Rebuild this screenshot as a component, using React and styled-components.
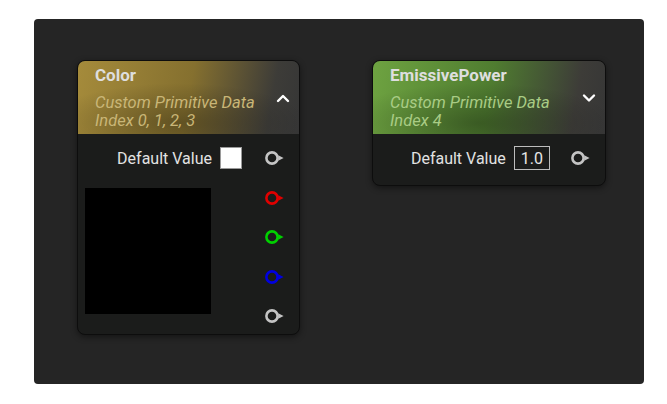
import styled, { createGlobalStyle } from 'styled-components';

const GlobalStyle = createGlobalStyle`
  html, body {
    margin: 0;
    padding: 0;
    background: #ffffff;
    font-family: Roboto, "Liberation Sans", sans-serif;
  }
`;

const Page = styled.div`
  width: 667px;
  height: 404px;
  padding: 19px 23px 0 34px;
  box-sizing: border-box;
`;

const Canvas = styled.div`
  width: 610px;
  height: 365px;
  background: #252525;
  border-radius: 4px;
  box-sizing: border-box;
  padding: 41px 0 0 43px;
  display: flex;
  align-items: flex-start;
  gap: 72px;
`;

const Node = styled.div`
  width: ${(p) => p.$width}px;
  background: #1b1c1b;
  border: 1px solid #0d0d0d;
  border-radius: 8px;
  box-shadow: 0 2px 6px rgba(0, 0, 0, 0.45);
  overflow: hidden;
  box-sizing: border-box;
`;

const Header = styled.div`
  height: 73px;
  display: flex;
  align-items: center;
  padding: 0 9px 0 17px;
  box-sizing: border-box;
  background:
    radial-gradient(ellipse 60% 55% at 45% 85%, rgba(0, 0, 0, 0.28), rgba(0, 0, 0, 0) 100%),
    linear-gradient(100deg, ${(p) => p.$tint} 0%, ${(p) => p.$mid} 50%, #3d3c38 86%, #363636 100%);
`;

const HeaderText = styled.div`
  flex: 1;
  display: flex;
  flex-direction: column;
`;

const Title = styled.div`
  font-size: 17px;
  font-weight: 700;
  color: #dedede;
  line-height: 18px;
  margin-bottom: 10px;
`;

const Subtitle = styled.div`
  font-size: 16.5px;
  font-style: italic;
  color: ${(p) => p.$color};
  line-height: 18px;
  white-space: nowrap;
`;

const Chevron = styled.svg`
  width: 14px;
  height: 10px;
  flex-shrink: 0;
`;

const Body = styled.div`
  display: flex;
  padding: 12px 14px ${(p) => p.$bottom}px 7px;
`;

const LeftColumn = styled.div`
  flex: 1;
  display: flex;
  flex-direction: column;
`;

const ValueRow = styled.div`
  height: 24px;
  display: flex;
  align-items: center;
  justify-content: flex-end;
  gap: 8px;
  margin-right: ${(p) => p.$gap}px;
`;

const Label = styled.span`
  font-size: 16px;
  color: #e2e2e2;
`;

const Swatch = styled.div`
  width: 20px;
  height: 20px;
  background: #ffffff;
  border: 1px solid #9a9a9a;
`;

const NumberBox = styled.div`
  height: 24px;
  box-sizing: border-box;
  padding: 0 6px;
  border: 1px solid #bdbdbd;
  color: #e6e6e6;
  font-size: 16px;
  display: flex;
  align-items: center;
`;

const Preview = styled.div`
  width: 126px;
  height: 126px;
  background: #000000;
  margin-top: 18px;
`;

const PinColumn = styled.div`
  display: flex;
  flex-direction: column;
  gap: 15.5px;
`;

const PinSlot = styled.div`
  height: 24px;
  display: flex;
  align-items: center;
`;

const Pin = ({ color }) => (
  <PinSlot>
    <svg width="20" height="14" viewBox="0 0 20 14">
      <circle cx="7" cy="7" r="5.6" fill="none" stroke={color} strokeWidth="2.6" />
      <path d="M13.2 4.2 L18.6 7 L13.2 9.8 Z" fill={color} />
    </svg>
  </PinSlot>
);

const ChevronIcon = ({ up }) => (
  <Chevron viewBox="0 0 14 10">
    <path
      d={up ? 'M2 8 L7 3 L12 8' : 'M2 2.5 L7 7.5 L12 2.5'}
      fill="none"
      stroke="#ffffff"
      strokeWidth="2.4"
      strokeLinecap="round"
      strokeLinejoin="round"
    />
  </Chevron>
);

export default function App() {
  return (
    <>
      <GlobalStyle />
      <Page>
        <Canvas>
          <Node $width={223}>
            <Header $tint="#a58b3b" $mid="#85702f">
              <HeaderText>
                <Title>Color</Title>
                <Subtitle $color="#c9b677">Custom Primitive Data</Subtitle>
                <Subtitle $color="#c9b677">Index 0, 1, 2, 3</Subtitle>
              </HeaderText>
              <ChevronIcon up />
            </Header>
            <Body $bottom={6}>
              <LeftColumn>
                <ValueRow $gap={23}>
                  <Label>Default Value</Label>
                  <Swatch />
                </ValueRow>
                <Preview />
              </LeftColumn>
              <PinColumn>
                <Pin color="#c4c4c4" />
                <Pin color="#e00000" />
                <Pin color="#00d000" />
                <Pin color="#0000e0" />
                <Pin color="#c4c4c4" />
              </PinColumn>
            </Body>
          </Node>
          <Node $width={234}>
            <Header $tint="#6ea341" $mid="#4f7c30">
              <HeaderText>
                <Title>EmissivePower</Title>
                <Subtitle $color="#a9cc85">Custom Primitive Data</Subtitle>
                <Subtitle $color="#a9cc85">Index 4</Subtitle>
              </HeaderText>
              <ChevronIcon />
            </Header>
            <Body $bottom={15}>
              <LeftColumn>
                <ValueRow $gap={21}>
                  <Label>Default Value</Label>
                  <NumberBox>1.0</NumberBox>
                </ValueRow>
              </LeftColumn>
              <PinColumn>
                <Pin color="#c4c4c4" />
              </PinColumn>
            </Body>
          </Node>
        </Canvas>
      </Page>
    </>
  );
}
